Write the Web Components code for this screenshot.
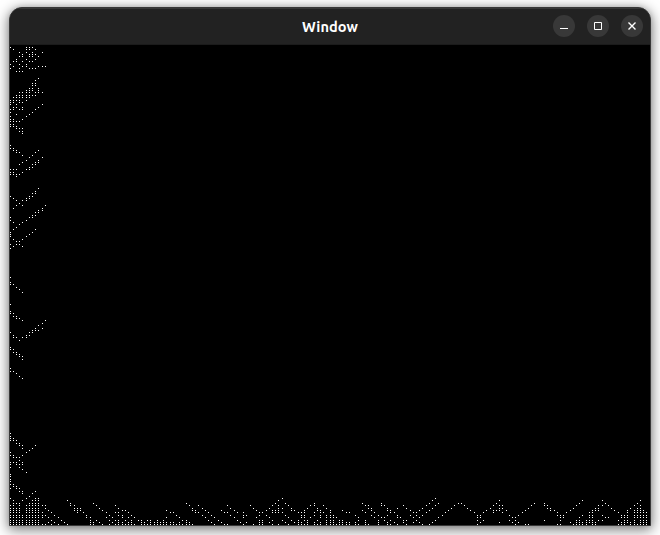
<!DOCTYPE html>
<html lang="en">
<head>
<meta charset="utf-8">
<title>Window</title>
<style>
html,body{margin:0;height:100%;overflow:hidden;background:#fff}
</style>
</head>
<body>
<app-window caption="Window"><cell-canvas></cell-canvas></app-window>
<script>
class WindowButton extends HTMLElement {
  constructor() {
    super();
    const shapes = {
      minimize: '<path d="M7 13.5h8"/>',
      maximize: '<path d="M7.5 7.5h7v7h-7z"/>',
      close: '<path d="M7.5 7.5l7 7M14.5 7.5l-7 7" stroke-width="1.4"/>'
    };
    this.attachShadow({mode: 'open'}).innerHTML = `<style>
      :host{display:block;width:22px;height:22px;border-radius:50%;background:#383838}
      svg{display:block;fill:none;stroke:#fff;stroke-width:1}
    </style><svg width="22" height="22" viewBox="0 0 22 22">${shapes[this.getAttribute('kind')]}</svg>`;
  }
}
customElements.define('window-button', WindowButton);

class TitleBar extends HTMLElement {
  constructor() {
    super();
    this.attachShadow({mode: 'open'}).innerHTML = `<style>
      :host{display:grid;grid-template-columns:1fr auto 1fr;align-items:center;height:37px;box-sizing:border-box;
        padding:0 7px 2px;background:#222;border-top:1px solid #383838;border-bottom:1px solid #1b1b1b;
        color:#fff;font:700 14.6px/20px Ubuntu,"Noto Sans","Open Sans",sans-serif}
      .title{grid-column:2;padding-top:3px;letter-spacing:.08px}
      .buttons{display:flex;gap:12px;justify-content:flex-end}
    </style><span class="title"><slot></slot></span><div class="buttons">
      <window-button kind="minimize"></window-button><window-button kind="maximize"></window-button><window-button kind="close"></window-button></div>`;
  }
}
customElements.define('title-bar', TitleBar);

// Lit cells: one line per row, "y: x x x", snapped to a 200 x 200 grid.
const CELLS = `
47:10 26 29 32
49:13 26 29 35
52:19 26 32 42
54:22 29 32 35
56:19 22 29 32 38
59:16 26 35
61:13 16 22 29 32
64:10 19 26
66:13 22 26 38 42 45
68:10 19 29 32 35
71:16 19 22
78:38
80:35
83:32 35
85:32 35
88:29 32 38
90:26 29 32 38
92:19 22 26 29 35 38 42
95:16 19 22 26 29 32 35
97:13 16 19 22 26 29
100:10 13 16 19 26
102:10 13 19 22
104:10 16 42
107:13 16 22 38
109:10 13 19 22 35
112:10 32
114:16 29
116:10 26
119:10 13 22
121:10 13 16 19
124:10 13
126:10 13 16
128:16 19 22
131:19 22
133:22
145:10
148:10 13
150:13 16 38
152:16 19 35
155:22 32
157:29 42
160:26 38
162:22 35 38
164:19 32 35
167:29 32
169:10 13 16 26 29
172:10 13 22
174:10 13 16 19
176:16
188:38
191:35
193:32 35
196:10 29 32
198:13 26 29
200:16 22 26
203:19
205:16 22 45
208:13 42
210:38 42
212:35 38
215:32 35
217:10 29 32
220:10 26
222:13 22
224:19
227:16
229:13 35
232:10 32
234:10 29
236:10 26
239:13 22
241:16 19
244:10 16 19
246:13 22
248:10
277:10
282:10
284:10 13
287:16
289:19
292:22
304:10
311:10
313:10 13
316:13 16
318:16 19
320:22 45
323:42
325:38
328:35 42
330:32 35 38
332:10 29 32
335:13 26 29
337:13 16 22 26
340:19
347:10
349:10 13
352:13 16
354:16 19
356:19 22
359:22
368:10
371:10 13
373:16
376:19
378:22
433:10
436:10
438:10 13
440:10 13 16
443:16 19
445:19 22 35
448:22 32
450:29
452:10 26
455:10 13 22
457:13 16 19
460:19
462:10 13 16 22
464:10 16 19 22
467:10 19
469:22
472:26
474:10
476:10
479:10
481:10
484:10 13
486:13 16
488:10 16 19
491:19 22 35
493:22 32
496:29
498:10 26 35 38 282 436
500:13 22 32 35 38 67 278 433 499 582 602 640
503:13 16 19 29 32 35 38 70 93 186 275 285 314 362 381 429 438 458 461 496 534 544 579 605 637
505:10 13 19 26 29 32 35 38 42 45 70 74 96 115 189 198 227 250 272 278 288 311 314 323 365 368 381 384 403 426 435 455 464 493 499 502 531 544 547 576 598 602 608 634 640
508:10 13 16 19 26 29 32 35 38 45 74 77 80 99 118 192 202 230 253 269 278 282 291 307 317 326 368 371 387 397 406 423 432 452 467 490 499 502 528 547 550 572 595 598 611 631 637 640
510:10 13 16 19 26 29 32 35 38 48 74 77 80 102 122 125 166 192 195 205 221 234 256 266 272 275 278 291 294 304 317 320 330 342 362 371 387 390 410 419 429 448 470 486 493 496 499 506 525 550 553 569 592 595 598 615 627 634 637 640 643
512:10 13 16 19 26 29 32 35 38 42 51 77 83 106 115 118 128 170 173 195 198 208 224 227 237 243 259 262 272 275 278 282 298 301 304 314 320 323 330 346 350 365 374 390 394 413 416 426 445 474 483 493 502 522 556 566 589 592 618 627 634 637 640 643 646
515:10 13 16 19 22 26 29 32 35 38 42 45 54 86 109 118 122 131 176 202 211 230 243 246 259 266 285 301 304 314 320 326 330 333 355 371 378 387 397 410 416 423 442 477 480 509 518 556 560 563 582 589 592 602 621 624 627 634 637 640 643 646
517:10 13 16 19 22 26 29 32 35 38 42 48 58 86 90 106 112 122 128 134 166 179 205 214 234 243 256 269 288 301 304 310 320 326 330 333 336 358 374 381 384 397 400 413 419 438 477 480 512 515 560 563 579 589 592 605 608 621 624 627 634 637 640 643 646
520:10 13 16 19 22 26 29 32 35 38 51 61 90 96 109 115 118 125 131 138 141 147 150 157 163 182 186 208 218 237 259 262 272 282 291 298 304 307 317 326 330 333 339 342 358 365 378 384 390 403 406 416 435 477 483 509 515 544 560 576 579 586 589 592 598 602 618 624 627 634 640 643 646
522:10 13 16 19 22 26 29 32 35 38 48 54 64 90 93 99 112 118 122 128 131 141 144 150 154 157 160 163 166 170 173 179 186 189 211 221 240 246 259 262 269 285 294 298 301 307 314 320 326 330 333 339 342 346 350 355 365 378 387 394 403 413 419 432 480 499 512 518 570 576 579 582 586 589 592 595 621 624 627 631 634 640 643 646
524:10 13 16 19 22 26 29 32 35 38 42 45 51 58 67 90 93 102 109 115 118 122 125 128 131 134 141 144 147 150 154 157 160 163 166 170 173 176 179 182 186 189 192 214 224 227 243 253 259 262 272 278 288 298 301 304 307 314 317 320 326 330 333 336 339 342 346 350 354 358 365 368 378 387 390 397 406 422 429 477 515 525 528 557 560 573 576 579 582 586 592 595 618 621 624 631 634 637 640 643 646`;

class CellCanvas extends HTMLElement {
  constructor() {
    super();
    let d = '';
    for (const line of CELLS.trim().split('\n')) {
      const [y, xs] = line.split(':');
      const row = Math.round((+y + .5 - 45) / 2.4);
      const top = Math.ceil(row * 2.4 - 1e-6) - 1;
      for (const x of xs.split(' ')) {
        const left = Math.floor(Math.round((+x + .3 - 10) / 3.2) * 3.2 + 1e-6);
        d += `M${left} ${top}h1v1h-1z`;
      }
    }
    this.attachShadow({mode: 'open'}).innerHTML = `<style>
      :host{display:block;background:#000}svg{display:block}
    </style><svg width="640" height="480" viewBox="0 0 640 480" shape-rendering="crispEdges"><path fill="#fff" d="${d}"/></svg>`;
  }
}
customElements.define('cell-canvas', CellCanvas);

class AppWindow extends HTMLElement {
  constructor() {
    super();
    this.attachShadow({mode: 'open'}).innerHTML = `<style>
      :host{display:block;height:535px;box-sizing:border-box;padding:7px 9px 9px}
      .frame{width:640px;border:1px solid #383838;border-radius:13px 13px 0 0;background:#222;
        box-shadow:0 3px 13px 1px rgba(0,0,0,.5),0 0 5px rgba(0,0,0,.12)}
      .clip{overflow:hidden;border-radius:12px 12px 0 0}
    </style><div class="frame"><div class="clip"><title-bar>${this.getAttribute('caption')}</title-bar><slot></slot></div></div>`;
  }
}
customElements.define('app-window', AppWindow);
</script>
</body>
</html>
